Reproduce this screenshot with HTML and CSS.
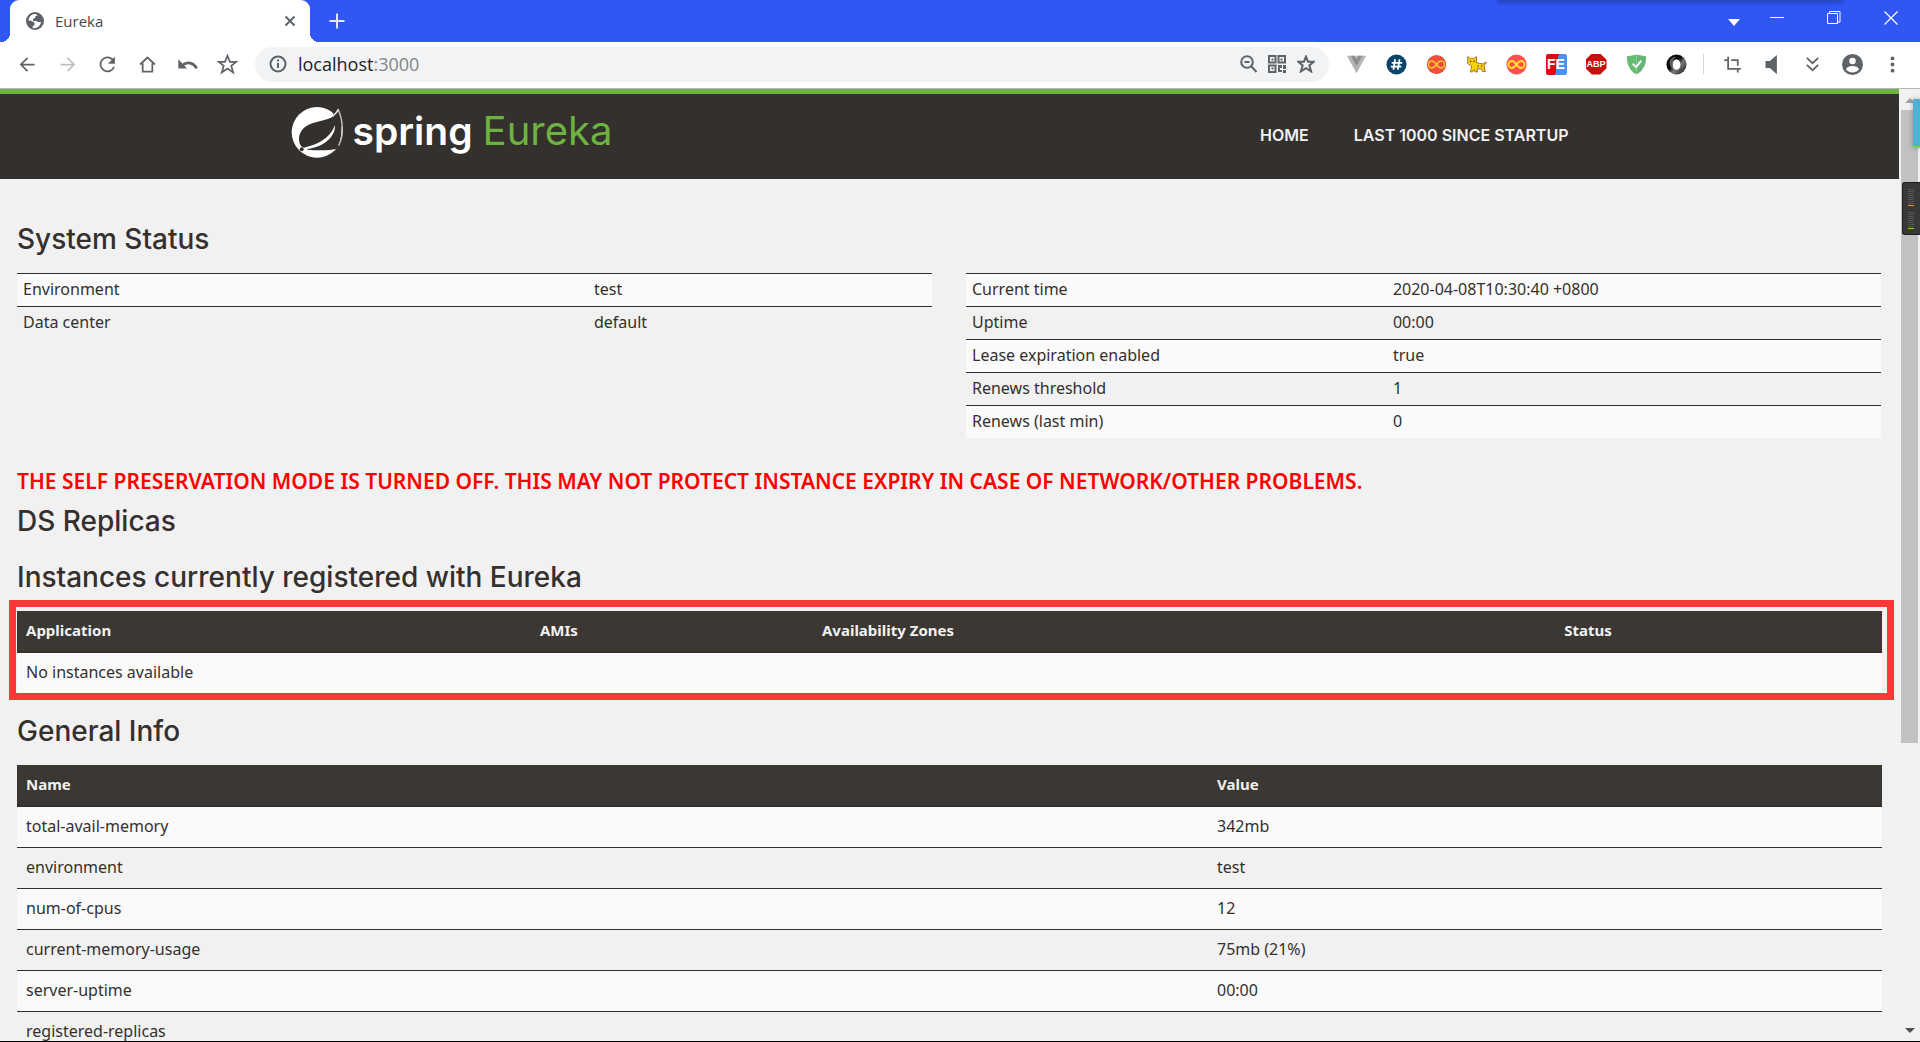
FILE: index.html
```html
<!DOCTYPE html>
<html lang="en">
<head>
<meta charset="utf-8">
<title>Eureka</title>
<link rel="stylesheet" href="styles.css">
</head>
<body>
<div class="tabstrip">
  <div class="tab">
    <svg class="tab-icon" viewBox="0 0 18 18"><circle cx="9" cy="9" r="9" fill="#5f6368"/><path d="M6.500 2.500C3.500 4 2.500 6 2.500 8.500L5.500 9l3 1.500v2.500l-1.500 1-.5 2c4 .8 8-2 8.500-6h-3L10.500 9H7V7l2-1 .5-2 2-.5-1-1.200c-1.500-.3-2.800-.3-4 .2z" fill="#fff"/></svg>
    <span class="tab-title">Eureka</span>
    <button class="plain" aria-label="Close tab"><svg width="12" height="12" viewBox="0 0 12 12"><path d="M1.500 1.500l9 9M10.500 1.500l-9 9" stroke="#5f6368" stroke-width="2"/></svg></button>
  </div>
  <button class="plain new-tab" aria-label="New tab"><svg width="16" height="16" viewBox="0 0 16 16"><path d="M8 .5v15M.5 8h15" stroke="#e4e8f5" stroke-width="2"/></svg></button>
  <div class="window-buttons">
    <button class="plain caret" aria-label="Search tabs"><svg width="12" height="7" viewBox="0 0 12 7"><path d="M0 0h12L6 7z" fill="#fff"/></svg></button>
    <button class="plain" aria-label="Minimize"><svg width="14" height="14" viewBox="0 0 14 14"><path d="M0 6.500h14" stroke="#fff"/></svg></button>
    <button class="plain" aria-label="Restore"><svg width="14" height="14" viewBox="0 0 14 14"><path d="M.5 2.500h10v10H.500zM2.500 2.500V.500h10.500v10.500h-2" fill="none" stroke="#fff"/></svg></button>
    <button class="plain" aria-label="Close"><svg width="14" height="14" viewBox="0 0 14 14"><path d="M.5.500l13 13M13.500.500l-13 13" stroke="#fff" stroke-width="1.200"/></svg></button>
  </div>
  <div class="edge-shadow"></div>
</div>

<div class="toolbar">
  <div class="tools">
    <button class="plain" aria-label="Back"><svg viewBox="0 0 24 24"><path d="M20 12H5M12 4.500L4.500 12l7.500 7.500" class="line"/></svg></button>
    <button class="plain faded" aria-label="Forward"><svg viewBox="0 0 24 24"><path d="M4 12h15M12 4.500l7.500 7.500-7.500 7.500" class="line"/></svg></button>
    <button class="plain" aria-label="Reload"><svg viewBox="0 0 24 24"><path d="M19.500 14.500a8 8 0 1 1-2-8.500l1.500 2" class="line"/><path d="M20.500 3v8h-8z" class="fill"/></svg></button>
    <button class="plain" aria-label="Home"><svg viewBox="0 0 24 24"><path d="M3.500 12L12 4l8.500 8M6.500 10.500V20h11v-9.500" class="line"/></svg></button>
    <button class="plain" aria-label="Undo"><svg viewBox="0 0 24 24"><path d="M1.500 6v10.500h10z" class="fill"/><path d="M6 13c6-5 13-3 16.500 3.500" class="line thick"/></svg></button>
    <button class="plain" aria-label="Bookmarks"><svg viewBox="0 0 24 24"><path d="M12 2l2.800 7h7.200l-5.700 4.600L18.500 21 12 16.700 5.500 21l2.200-7.400L2 9h7.200z" class="line"/></svg></button>
  </div>
  <form class="omnibox">
    <svg class="info" viewBox="0 0 18 18"><circle cx="9" cy="9" r="7.500" class="line"/><path d="M9 8v5M9 4.500v2" class="line"/></svg>
    <div class="url">localhost<span class="port">:3000</span></div>
    <svg viewBox="0 0 18 18"><circle cx="8" cy="7" r="5.800" class="line thin"/><path d="M12.500 11.500l5 5.500" class="line"/><path d="M5.500 7h5" class="line thin"/></svg>
    <svg viewBox="0 0 18 18"><path d="M1 1h6.500v6.500H1zM10.500 1H17v6.500h-6.500zM1 10.500h6.500V17H1z" class="line thin"/><path d="M3.500 3.500h2v2h-2zM12.500 3.500h2v2h-2zM3.500 12.500h2v2h-2zM10 10h4v3h-2v2h2v2h-4zM15 10h3v4h-3zM15 15h3v3h-3z" class="fill"/></svg>
    <svg viewBox="0 0 18 18"><path d="M9 1.500l2 5.200h5.800l-4.500 3.700 1.800 6L9 13.200 3.900 16.400l1.800-6L1.200 6.700H7z" class="line thin"/></svg>
  </form>
  <div class="tools">
    <button class="plain" aria-label="Vue devtools"><svg viewBox="0 0 24 24"><path d="M1 2h22L12 22z" fill="#b5b5b5"/><path d="M5.500 2h4l2.500 4 2.500-4h4L12 14z" fill="#8d8d8d"/></svg></button>
    <button class="plain" aria-label="Hash tool"><svg viewBox="0 0 24 24"><circle cx="12" cy="12" r="11.500" fill="#0b456b"/><path d="M10.500 6l-2 12M15.500 6l-2 12M6.500 10h12M5.500 14.500h12" stroke="#fff" stroke-width="2" fill="none"/></svg></button>
    <button class="plain" aria-label="Infinity new tab"><svg viewBox="0 0 24 24"><circle cx="12" cy="12" r="11" fill="#ee4f3c"/><path d="M12 12c-2-3-3.500-4-5.200-4a4 4 0 0 0 0 8c1.700 0 3.200-1 5.200-4s3.500-4 5.200-4a4 4 0 0 1 0 8c-1.700 0-3.200-1-5.200-4z" fill="none" stroke="#f3c52a" stroke-width="1.700"/></svg></button>
    <button class="plain" aria-label="Tampercat"><svg viewBox="0 0 24 24"><path d="M2 3l3 2h4l3-2v7l8 1.500 1.500-2H23l-2 3.500v3l1 4h-3l-1.500-3h-5l.5 3.500h-2.500L9 18l-1.500 2.500H5L6.500 14 2 11z" fill="#f5d40e" stroke="#a0602a"/><path d="M4.500 7.500h1.500v2H4.500zM8.500 7.500H10v2H8.500zM13 13h1.500v1.500H13zM17 13h1.500v1.500H17z" fill="#6b4020"/></svg></button>
    <button class="plain" aria-label="Infinity"><svg viewBox="0 0 24 24"><circle cx="12" cy="12" r="11.500" fill="#ff4f50"/><path d="M12 12c-2-3-3.500-4-5.200-4a4 4 0 0 0 0 8c1.700 0 3.200-1 5.200-4s3.500-4 5.200-4a4 4 0 0 1 0 8c-1.700 0-3.200-1-5.200-4z" fill="none" stroke="#ffe51f" stroke-width="2.200"/></svg></button>
    <button class="plain badge fe" aria-label="FE helper"><span>FE</span></button>
    <button class="plain badge abp" aria-label="Adblock Plus"><span>ABP</span></button>
    <button class="plain" aria-label="AdGuard"><svg viewBox="0 0 24 24"><path d="M12 .5c4 1 7 1.500 11 2 0 10-3 16-11 21z" fill="#66b574"/><path d="M12 .5c-4 1-7 1.500-11 2 0 10 3 16 11 21z" fill="#68bc71"/><path d="M7.500 11l4 4 6-7.500" fill="none" stroke="#fff" stroke-width="2.200"/></svg></button>
    <button class="plain" aria-label="JSON viewer"><svg viewBox="0 0 24 24"><defs><linearGradient id="ring" x1="0" y1="0" x2="1" y2="1"><stop offset="0" stop-color="#222"/><stop offset=".4" stop-color="#000"/><stop offset=".6" stop-color="#777"/><stop offset="1" stop-color="#111"/></linearGradient></defs><circle cx="12" cy="12" r="11.500" fill="url(#ring)"/><ellipse cx="12" cy="12" rx="4.500" ry="6" fill="#fff"/><path d="M4 9c1-4 4-6 8-6-3 2-5 5-4 12 1 2 2 3 4 4-5-1-8-5-8-10z" fill="#999" opacity=".6"/></svg></button>
  </div>
  <div class="separator"></div>
  <div class="tools">
    <button class="plain" aria-label="Crop"><svg viewBox="0 0 24 24"><path d="M2.500 7H6M7 3v14h14.500M10.500 7h7.500v6.500M18 17v4" class="line"/></svg></button>
    <button class="plain" aria-label="Sound"><svg viewBox="0 0 24 24"><path d="M4 8h5l8-7v22l-8-7H4z" class="fill"/></svg></button>
    <button class="plain" aria-label="More extensions"><svg viewBox="0 0 24 24"><path d="M5.500 4.500L12 10.500l6.500-6M5.500 12.500L12 18.500l6.500-6" class="line"/></svg></button>
    <button class="plain" aria-label="Profile"><svg viewBox="0 0 24 24"><circle cx="12" cy="12" r="12" class="fill"/><circle cx="12" cy="8" r="3.700" fill="#fff"/><path d="M4.500 17.500c2-5 13-5 15 0-4 5-11 5-15 0z" fill="#fff"/></svg></button>
    <button class="plain" aria-label="Menu"><svg viewBox="0 0 24 24"><circle cx="12" cy="5" r="2.200" class="fill"/><circle cx="12" cy="12" r="2.200" class="fill"/><circle cx="12" cy="19" r="2.200" class="fill"/></svg></button>
  </div>
</div>

<div class="viewport">
  <div class="page">
    <header class="site-header">
      <div class="header-inner">
        <a class="brand" href="#">
          <svg class="leaf" viewBox="0 0 156 156"><circle cx="78" cy="79" r="76" fill="#fff"/><path d="M134 0L126 26 156 66V0z" fill="#34302d"/><path d="M141 16C130 40 95 42 66 51 34 61 20 84 25 108c3 12 9 16 14 17C80 116 116 98 132 58c2 33-34 66-82 71l-2 2c36 3 66 3 90-3 17-28 18-80 3-112z" fill="#34302d"/><path d="M126 30c8-6 12-10 16-20" fill="none" stroke="#fff" stroke-width="4"/><path d="M141 8c14 32 20 78 2 110" fill="none" stroke="#c4c3c2" stroke-width="4"/><circle cx="32" cy="130" r="6" fill="#34302d"/></svg>
          <span class="brand-spring">spring</span>
          <span class="brand-eureka">Eureka</span>
        </a>
        <nav class="nav">
          <a href="#">HOME</a>
          <a href="#">LAST 1000 SINCE STARTUP</a>
        </nav>
      </div>
    </header>
    <main class="content">
      <h1>System Status</h1>
      <div class="status-row">
        <table class="compact env">
          <tbody>
            <tr><td>Environment</td><td>test</td></tr>
            <tr><td>Data center</td><td>default</td></tr>
          </tbody>
        </table>
        <table class="compact time">
          <tbody>
            <tr><td>Current time</td><td>2020-04-08T10:30:40 +0800</td></tr>
            <tr><td>Uptime</td><td>00:00</td></tr>
            <tr><td>Lease expiration enabled</td><td>true</td></tr>
            <tr><td>Renews threshold</td><td>1</td></tr>
            <tr><td>Renews (last min)</td><td>0</td></tr>
          </tbody>
        </table>
      </div>
      <h4 class="warning">THE SELF PRESERVATION MODE IS TURNED OFF. THIS MAY NOT PROTECT INSTANCE EXPIRY IN CASE OF NETWORK/OTHER PROBLEMS.</h4>
      <h1>DS Replicas</h1>
      <h1 class="instances-title">Instances currently registered with Eureka</h1>
      <div class="highlight">
        <table class="data instances">
          <thead>
            <tr><th>Application</th><th>AMIs</th><th>Availability Zones</th><th>Status</th></tr>
          </thead>
          <tbody>
            <tr><td colspan="4">No instances available</td></tr>
          </tbody>
        </table>
      </div>
      <h1>General Info</h1>
      <table class="data general">
        <thead>
          <tr><th>Name</th><th>Value</th></tr>
        </thead>
        <tbody>
          <tr><td>total-avail-memory</td><td>342mb</td></tr>
          <tr><td>environment</td><td>test</td></tr>
          <tr><td>num-of-cpus</td><td>12</td></tr>
          <tr><td>current-memory-usage</td><td>75mb (21%)</td></tr>
          <tr><td>server-uptime</td><td>00:00</td></tr>
          <tr><td>registered-replicas</td><td></td></tr>
        </tbody>
      </table>
    </main>
  </div>
  <div class="scrollbar">
    <svg width="10" height="5" viewBox="0 0 10 5"><path d="M5 0l5 5H0z" fill="#a3a3a3"/></svg>
    <div class="track"><div class="thumb"></div></div>
    <svg width="10" height="5" viewBox="0 0 10 5"><path d="M5 5L0 0h10z" fill="#505050"/></svg>
    <div class="dock-blue"></div>
    <div class="dock-meter"><i class="bars orange"></i><i class="bars green"></i></div>
  </div>
</div>
</body>
</html>
```
FILE: styles.css
```css
* { box-sizing: border-box; }

body {
  margin: 0;
  height: 100vh;
  display: flex;
  flex-direction: column;
  overflow: hidden;
  background: #f1f1f1;
  color: #34302d;
  font: 16px/20px "Noto Sans", sans-serif;
  border-bottom: 1px solid #000;
}

.plain {
  display: flex;
  align-items: center;
  justify-content: center;
  padding: 0;
  border: 0;
  background: none;
}

.line { fill: none; stroke: #5f6368; stroke-width: 2; }
.thick { stroke-width: 3; }
.thin { stroke-width: 2; }
.fill { fill: #5f6368; }

/* Browser tab strip */
.tabstrip {
  position: relative;
  display: flex;
  flex: none;
  height: 42px;
  padding-left: 10px;
  background: #3056f4;
}
.tab {
  position: relative;
  display: flex;
  align-items: center;
  width: 300px;
  padding: 0 14px 0 16px;
  border-radius: 9px 9px 0 0;
  background: #fff;
}
.tab::before, .tab::after {
  content: "";
  position: absolute;
  bottom: 0;
  width: 9px;
  height: 9px;
}
.tab::before { left: -9px; background: radial-gradient(circle at 0 0, #3056f4 9px, #fff 9px); }
.tab::after { right: -9px; background: radial-gradient(circle at 100% 0, #3056f4 9px, #fff 9px); }
.tab-icon { width: 18px; height: 18px; margin-right: 11px; }
.tab-title { flex: 1; font: 15px/20px "Open Sans", sans-serif; color: #45494d; }
.new-tab { width: 54px; }
.window-buttons {
  display: flex;
  height: 36px;
  margin-left: auto;
  padding-right: 1px;
}
.window-buttons .plain { width: 57px; }
.window-buttons .caret { width: 28px; padding-top: 8px; }
.edge-shadow {
  position: absolute;
  top: -8px;
  left: 78%;
  right: 78px;
  height: 10px;
  background: #2947c8;
  box-shadow: 0 0 4px rgba(0, 0, 60, .4);
}

/* Browser toolbar */
.toolbar {
  display: flex;
  flex: none;
  align-items: center;
  height: 47px;
  padding: 0 8px 2px 7px;
  background: #fff;
  border-bottom: 1px solid #b6b4b6;
}
.tools { display: flex; }
.tools .plain { width: 40px; height: 36px; }
.tools svg { width: 21px; height: 21px; }
.faded { opacity: .4; }
.omnibox {
  display: flex;
  flex: 1;
  align-items: center;
  gap: 11px;
  height: 35px;
  margin: 0 7px 0 8px;
  padding: 0 14px;
  border-radius: 18px;
  background: #f1f3f4;
}
.omnibox svg { width: 18px; height: 18px; }
.url { flex: 1; font: 18px/24px "Open Sans", sans-serif; color: #202124; }
.port { color: #80868b; }
.badge span {
  width: 21px;
  height: 21px;
  color: #fff;
  font: bold 14px/21px "Liberation Sans", sans-serif;
  text-align: center;
}
.fe span { border-radius: 2px; background: linear-gradient(100deg, #e30613 52%, #4a90f5 52%); }
.abp span {
  font-size: 9px;
  background: #c70d0d;
  clip-path: polygon(30% 0, 70% 0, 100% 30%, 100% 70%, 70% 100%, 30% 100%, 0 70%, 0 30%);
}
.separator { width: 1px; height: 20px; margin: 0 8px 0 7px; background: #d5d5d5; }

/* Web page */
.viewport { display: flex; flex: 1; min-height: 0; }
.page { flex: 1; overflow: hidden; }

.site-header { background: #34302d; border-top: 5px solid #6db33f; }
.header-inner {
  display: flex;
  justify-content: space-between;
  max-width: 1318px;
  height: 85px;
  margin: 0 auto;
}
.brand {
  display: flex;
  align-items: baseline;
  padding-top: 12px;
  text-decoration: none;
}
.leaf { align-self: flex-start; width: 52px; height: 52px; margin-right: 10px; }
.brand-spring {
  margin-right: 10px;
  color: #fff;
  font: 600 39px/50px Inter, sans-serif;
}
.brand-eureka { color: #6db33f; font: 400 40px/50px Inter, sans-serif; }
.nav { display: flex; align-items: center; gap: 45px; padding: 0 40px 4px 0; }
.nav a {
  color: #f1f1f1;
  font: 600 16px/20px Inter, sans-serif;
  text-decoration: none;
}

.content { padding: 42px 17px 0; }
h1 {
  margin: 0 0 16px;
  font: 500 28px/36px Inter, sans-serif;
}
table {
  width: 100%;
  table-layout: fixed;
  border-collapse: separate;
  border-spacing: 0;
}
td, th { text-align: left; vertical-align: top; }
tbody tr:nth-child(odd) { background: #fafafa; }
td { border-top: 1px solid #34302d; }

.status-row {
  display: grid;
  grid-template-columns: 1fr 1fr;
  align-items: start;
  gap: 34px;
  padding-right: 1px;
  margin-bottom: 29px;
}
.compact td { height: 33px; padding: 5px 6px; }
.env td:first-child { width: 62.4%; }
.time td:first-child { width: 46%; }

.warning {
  margin: 0 0 8px;
  color: #f00;
  font: 600 21px/28px "Noto Sans", sans-serif;
  white-space: nowrap;
}
.instances-title { margin: 20px 0 5px; }
.highlight {
  margin: 0 -12px 13px -8px;
  padding: 4px 5px 0 1px;
  border: 7px solid #fd3838;
}
.data th {
  height: 42px;
  padding: 9px;
  background: #3b3733;
  border-bottom: 2px solid #34302d;
  color: #f1f1f1;
  font-size: 15px;
  font-weight: 700;
}
.data td { height: 41px; padding: 9px; }
.data tbody tr:first-child td { height: 40px; border-top: 0; }
.instances th:nth-child(1) { width: 27.56%; }
.instances th:nth-child(2) { width: 15.12%; }
.instances th:nth-child(3) { width: 39.8%; }
.general th:first-child { width: 63.86%; }

/* Page scrollbar with docked widgets */
.scrollbar {
  position: relative;
  display: flex;
  flex-direction: column;
  align-items: center;
  flex: none;
  width: 21px;
  padding: 9px 0 8px;
  background: #f1f1f1;
}
.track { flex: 1; width: 17px; padding: 7px 0; }
.thumb { height: 69.5%; background: #c1c1c1; }
.dock-blue {
  position: absolute;
  top: 10px;
  right: 0;
  width: 7px;
  height: 49px;
  background: #4fb0d6;
  border-bottom: 2px solid #8fca5c;
  box-shadow: 0 0 5px rgba(0, 0, 0, .3);
}
.dock-meter {
  position: absolute;
  top: 93px;
  right: 0;
  width: 18px;
  height: 53px;
  padding: 6px 0 0 5px;
  border: 1px solid #1c1c1c;
  border-right: 0;
  border-radius: 3px 0 0 3px;
  background: #383838;
}
.bars {
  display: block;
  width: 6px;
  height: 17px;
  margin-bottom: 6px;
  border-bottom: 1px solid;
  background: repeating-linear-gradient(#555 0 1px, #383838 1px 2px);
}
.orange { border-color: #f0921e; }
.green { border-color: #7fe01c; }
```
